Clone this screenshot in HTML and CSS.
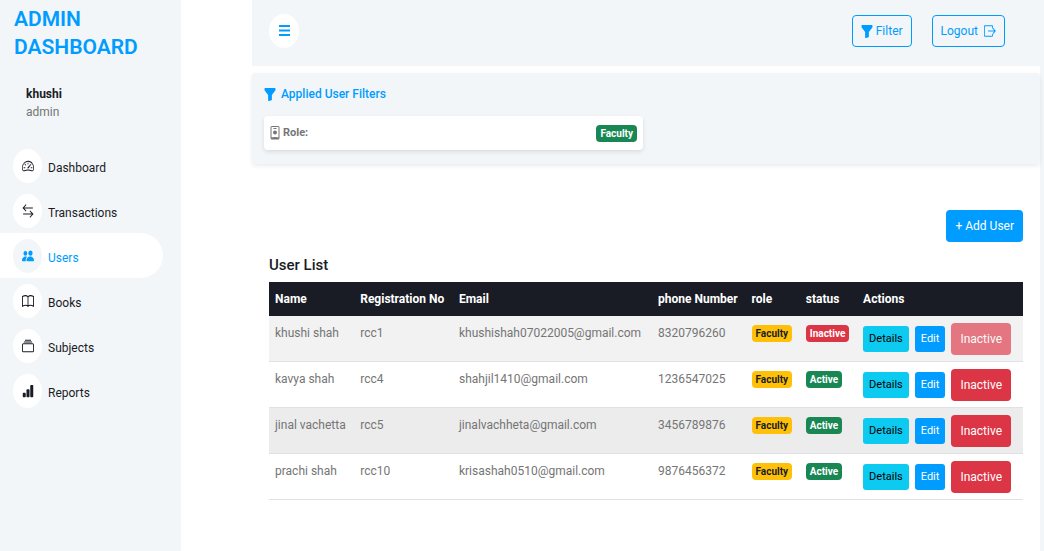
FILE: index.html
```html
<!DOCTYPE html>
<html lang="en">
<head>
<meta charset="utf-8">
<meta name="viewport" content="width=device-width, initial-scale=1">
<title>Admin Dashboard</title>
<link rel="stylesheet" href="styles.css">
</head>
<body>
<svg class="sprite" aria-hidden="true">
  <symbol id="funnel" viewBox="0 0 16 16" preserveAspectRatio="none"><path d="M1.500 1h13a.8.8 0 0 1 .8.8v1.700a1 1 0 0 1-.2.600L10.500 9v5.300a.8.8 0 0 1-.5.7l-3.500 1a.8.8 0 0 1-1-.7V9L.9 4.100a1 1 0 0 1-.2-.6V1.800a.8.8 0 0 1 .8-.8z"/></symbol>
</svg>
<div class="layout">
  <aside class="sidebar">
    <h1 class="brand">ADMIN DASHBOARD</h1>
    <div class="profile">
      <strong class="profile-name">khushi</strong>
      <span class="profile-role">admin</span>
    </div>
    <nav class="nav">
      <a class="nav-link" href="#dashboard"><span class="nav-icon"><svg class="icon" viewBox="0 0 16 16" preserveAspectRatio="none"><path d="M8 4a.5.5 0 0 1 .5.5V6a.5.5 0 0 1-1 0V4.500A.5.5 0 0 1 8 4zM3.732 5.732a.5.5 0 0 1 .707 0l.915.914a.5.5 0 1 1-.708.708l-.914-.915a.5.5 0 0 1 0-.707zM2 10a.5.5 0 0 1 .5-.5h1.586a.5.5 0 0 1 0 1H2.500A.5.5 0 0 1 2 10zm9.500 0a.5.5 0 0 1 .5-.5h1.500a.5.5 0 0 1 0 1H12a.5.5 0 0 1-.5-.5zm.754-4.246a.389.389 0 0 0-.527-.02L7.547 9.310a.91.91 0 1 0 1.302 1.258l3.434-4.297a.389.389 0 0 0-.029-.518z"/><path fill-rule="evenodd" d="M0 10a8 8 0 1 1 15.547 2.661c-.442 1.253-1.845 1.602-2.932 1.250C11.309 13.488 9.475 13 8 13c-1.474 0-3.310.488-4.615.911-1.087.352-2.490.003-2.932-1.250A7.988 7.988 0 0 1 0 10zm8-7a7 7 0 0 0-6.603 9.329c.203.575.923.876 1.680.630C4.397 12.533 6.358 12 8 12s3.604.532 4.923.960c.757.245 1.477-.056 1.680-.631A7 7 0 0 0 8 3z"/></svg></span><span class="nav-text">Dashboard</span></a>
      <a class="nav-link" href="#transactions"><span class="nav-icon"><svg class="icon line" viewBox="0 0 16 16" preserveAspectRatio="none"><path d="M5.500.8 1.500 4.500l4 3.700M1.500 4.500h13M10.500 7.800l4 3.700-4 3.700M14.500 11.500h-13"/></svg></span><span class="nav-text">Transactions</span></a>
      <a class="nav-link active" href="#users" aria-current="page"><span class="nav-icon"><svg class="icon" viewBox="0 0 16 16" preserveAspectRatio="none"><ellipse cx="11.300" cy="4.700" rx="2.900" ry="3"/><ellipse cx="4.500" cy="5" rx="2.500" ry="2.700"/><path d="M7 14s-1 0-1-1.200S7 8.500 11 8.500s5 3.100 5 4.300S15 14 15 14zM5.200 14A2.200 2.200 0 0 1 5 12.800c0-1.400.7-2.800 1.900-3.900A6.300 6.300 0 0 0 5 8.600c-4 0-5 3-5 4.200S1 14 1 14z"/></svg></span><span class="nav-text">Users</span></a>
      <a class="nav-link" href="#books"><span class="nav-icon"><svg class="icon line" viewBox="0 0 16 16" preserveAspectRatio="none"><path d="M8 3.200C6.500 1.800 3 1.800.6 2.900v11C3 12.800 6.500 12.600 8 14c1.500-1.400 5-1.200 7.400-.1v-11C13 1.800 9.500 1.800 8 3.200zV14"/></svg></span><span class="nav-text">Books</span></a>
      <a class="nav-link" href="#subjects"><span class="nav-icon"><svg class="icon line" viewBox="0 0 16 16" preserveAspectRatio="none"><path d="M4 1.500h8M2.500 3.500h11"/><rect x=".6" y="5.500" width="14.800" height="9" rx="1.200"/></svg></span><span class="nav-text">Subjects</span></a>
      <a class="nav-link" href="#reports"><span class="nav-icon"><svg class="icon" viewBox="0 0 16 16" preserveAspectRatio="none"><rect x="1" y="10" width="4" height="5" rx="1"/><rect x="6" y="6" width="4" height="9" rx="1"/><rect x="11" y="1" width="4" height="14" rx="1"/></svg></span><span class="nav-text">Reports</span></a>
    </nav>
  </aside>

  <main class="content">
    <header class="topbar">
      <button class="menu-toggle" type="button" aria-label="Toggle menu"><svg class="menu-icon" viewBox="0 0 11 12" aria-hidden="true"><path d="M0 1h11M0 5.500h11M0 10h11"/></svg></button>
      <div class="topbar-actions">
        <button class="btn btn-outline" type="button"><svg class="icon"><use href="#funnel"/></svg>Filter</button>
        <button class="btn btn-outline btn-logout" type="button">Logout<svg class="icon line" viewBox="0 0 16 16" preserveAspectRatio="none"><path d="M11.500 5V3q0-1-1-1h-9q-1 0-1 1v10q0 1 1 1h9q1 0 1-1v-2M5.500 8H15M12 5l3 3-3 3"/></svg></button>
      </div>
    </header>

    <section class="filters">
      <h2 class="filters-title"><svg class="icon"><use href="#funnel"/></svg>Applied User Filters</h2>
      <div class="filter-card">
        <span class="filter-label"><svg class="badge-icon" viewBox="0 0 10 14" aria-hidden="true"><path class="badge-frame" d="M1.500.5h7q.5 0 .5.500v11q0 1-.5 1h-7q-.5 0-.5-1V1q0-.5.5-.5zM3.500 2.500h3"/><circle cx="5" cy="6.500" r="2"/><path d="M1 13v-1.500q4-1 8 0V13z"/></svg>Role:</span>
        <span class="badge green">Faculty</span>
      </div>
    </section>

    <section class="users">
      <div class="users-actions"><button class="btn btn-primary" type="button">+ Add User</button></div>
      <h2 class="users-title">User List</h2>
      <table class="table">
        <colgroup><col class="c-name"><col class="c-reg"><col class="c-email"><col class="c-phone"><col class="c-role"><col class="c-status"><col class="c-actions"></colgroup>
        <thead><tr><th>Name</th><th>Registration No</th><th>Email</th><th>phone Number</th><th>role</th><th>status</th><th>Actions</th></tr></thead>
        <tbody>
          <tr><td>khushi shah</td><td>rcc1</td><td>khushishah07022005@gmail.com</td><td>8320796260</td><td><span class="badge yellow">Faculty</span></td><td><span class="badge red">Inactive</span></td><td><div class="row-actions"><button class="btn btn-sm btn-info" type="button">Details</button><button class="btn btn-sm btn-primary" type="button">Edit</button><button class="btn btn-danger" type="button" disabled>Inactive</button></div></td></tr>
          <tr><td>kavya shah</td><td>rcc4</td><td>shahjil1410@gmail.com</td><td>1236547025</td><td><span class="badge yellow">Faculty</span></td><td><span class="badge green">Active</span></td><td><div class="row-actions"><button class="btn btn-sm btn-info" type="button">Details</button><button class="btn btn-sm btn-primary" type="button">Edit</button><button class="btn btn-danger" type="button">Inactive</button></div></td></tr>
          <tr class="current"><td>jinal vachetta</td><td>rcc5</td><td>jinalvachheta@gmail.com</td><td>3456789876</td><td><span class="badge yellow">Faculty</span></td><td><span class="badge green">Active</span></td><td><div class="row-actions"><button class="btn btn-sm btn-info" type="button">Details</button><button class="btn btn-sm btn-primary" type="button">Edit</button><button class="btn btn-danger" type="button">Inactive</button></div></td></tr>
          <tr><td>prachi shah</td><td>rcc10</td><td>krisashah0510@gmail.com</td><td>9876456372</td><td><span class="badge yellow">Faculty</span></td><td><span class="badge green">Active</span></td><td><div class="row-actions"><button class="btn btn-sm btn-info" type="button">Details</button><button class="btn btn-sm btn-primary" type="button">Edit</button><button class="btn btn-danger" type="button">Inactive</button></div></td></tr>
        </tbody>
      </table>
    </section>
  </main>
</div>
</body>
</html>
```
FILE: styles.css
```css
:root {
  --blue: #009cff;
  --light: #f3f6f9;
  --dark: #191c24;
  --gray: #757575;
}

* { box-sizing: border-box; }

body {
  margin: 0;
  font-family: Roboto, "Liberation Sans", sans-serif;
  font-size: 12px;
  line-height: 20px;
  color: var(--gray);
  background: #fff;
}

h1, h2 { margin: 0; }

.sprite { position: absolute; width: 0; height: 0; }

.layout {
  display: flex;
  min-height: 100vh;
  border-right: 4px solid var(--light);
}

.icon {
  flex: none;
  width: 12px;
  height: 14px;
  fill: currentColor;
}

.line {
  fill: none;
  stroke: currentColor;
  stroke-width: 1.2;
}

/* Sidebar */
.sidebar {
  flex: none;
  width: 181px;
  padding: 5px 18px 0 0;
  background: var(--light);
}

.brand {
  padding-left: 14px;
  font-size: 21px;
  line-height: 28px;
  font-weight: 600;
  color: var(--blue);
}

.profile {
  display: flex;
  flex-direction: column;
  padding: 24px 0 22px 26px;
  line-height: 18px;
}

.profile-name { color: var(--dark); }

.nav { display: flex; flex-direction: column; }

.nav-link {
  display: flex;
  align-items: center;
  gap: 6px;
  height: 45px;
  padding-left: 13px;
  border-radius: 0 23px 23px 0;
  font-size: 13px;
  color: var(--dark);
  text-decoration: none;
}

.nav-text { padding-top: 4px; }

.nav-icon {
  display: grid;
  place-items: center;
  width: 29px;
  height: 34px;
  border-radius: 50%;
  background: #fff;
}

.nav-link { font-size: 12px; }
.active { color: var(--blue); background: #fff; }
.active .nav-icon { background: var(--light); }

/* Buttons */
.btn {
  display: inline-flex;
  align-items: center;
  gap: 3px;
  height: 32px;
  padding: 0 8px;
  border: 1px solid transparent;
  border-radius: 4px;
  font: inherit;
  white-space: nowrap;
  background: transparent;
}

.btn-sm { height: 26px; padding: 0 5px; font-size: 11px; border-radius: 3px; }
.btn-outline { color: var(--blue); border-color: var(--blue); }
.btn-logout { gap: 6px; }
.btn-primary { color: #fff; background: var(--blue); }
.btn-info { color: #000; background: #0dcaf0; }
.btn-danger { color: #fff; background: #dc3545; }
.btn:disabled { opacity: .65; }

/* Main area */
.content {
  flex: 1;
  min-width: 0;
  margin-left: 71px;
}

.topbar {
  display: flex;
  align-items: center;
  justify-content: space-between;
  padding: 14px 35px 18px 17px;
  background: var(--light);
}

.menu-toggle {
  display: grid;
  place-items: center;
  width: 30px;
  height: 34px;
  padding: 0;
  border: 0;
  border-radius: 50%;
  background: #fff;
}

.menu-icon { width: 11px; height: 12px; stroke: var(--blue); stroke-width: 2; }

.topbar-actions { display: flex; gap: 20px; }

.filters {
  margin-top: 7px;
  padding: 11px 12px 14px;
  border-radius: 4px;
  background: var(--light);
  box-shadow: 0 2px 4px rgba(0, 0, 0, .08);
}

.filters-title {
  display: flex;
  align-items: center;
  gap: 5px;
  font-size: 12px;
  font-weight: 500;
  color: var(--blue);
}

.filter-card {
  display: flex;
  align-items: center;
  justify-content: space-between;
  width: calc(50% - 3px);
  height: 34px;
  margin-top: 12px;
  padding: 0 6px;
  border-radius: 4px;
  background: #fff;
  box-shadow: 0 2px 4px rgba(0, 0, 0, .1);
}

.filter-label {
  display: flex;
  align-items: center;
  gap: 3px;
  font-size: 11px;
  font-weight: 700;
}

.badge-icon { width: 10px; height: 14px; fill: currentColor; }
.badge-frame { fill: none; stroke: currentColor; }

.badge {
  display: inline-block;
  padding: 0 4px;
  border-radius: 4px;
  font-size: 10px;
  line-height: 17px;
  font-weight: 700;
  color: #fff;
}

.green { background: #198754; }
.red { background: #dc3545; }
.yellow { color: var(--dark); background: #ffc107; }

/* User list */
.users { padding: 46px 17px 0; }
.users-actions { display: flex; justify-content: flex-end; }

.users-title {
  margin: 11px 0 5px;
  font-size: 15px;
  line-height: 24px;
  font-weight: 500;
  color: var(--dark);
}

.table {
  width: 100%;
  table-layout: fixed;
  border-collapse: separate;
  border-spacing: 0;
}

.c-name { width: 11.3%; }
.c-reg { width: 13.1%; }
.c-email { width: 26.4%; }
.c-phone { width: 12.4%; }
.c-role { width: 7.2%; }
.c-status { width: 7.6%; }
.c-actions { width: 22%; }

.table th {
  padding: 7px 0 7px 6px;
  text-align: left;
  white-space: nowrap;
  color: #fff;
  background: var(--dark);
}

.table td {
  padding: 7px 0 6px 6px;
  vertical-align: top;
  white-space: nowrap;
  border-bottom: 1px solid #dee2e6;
}

.table tbody tr:nth-child(odd) { background: #f2f2f2; }
.table tbody tr.current:nth-child(odd) { background: #ececec; }

.row-actions { display: flex; align-items: center; gap: 6px; }
```
